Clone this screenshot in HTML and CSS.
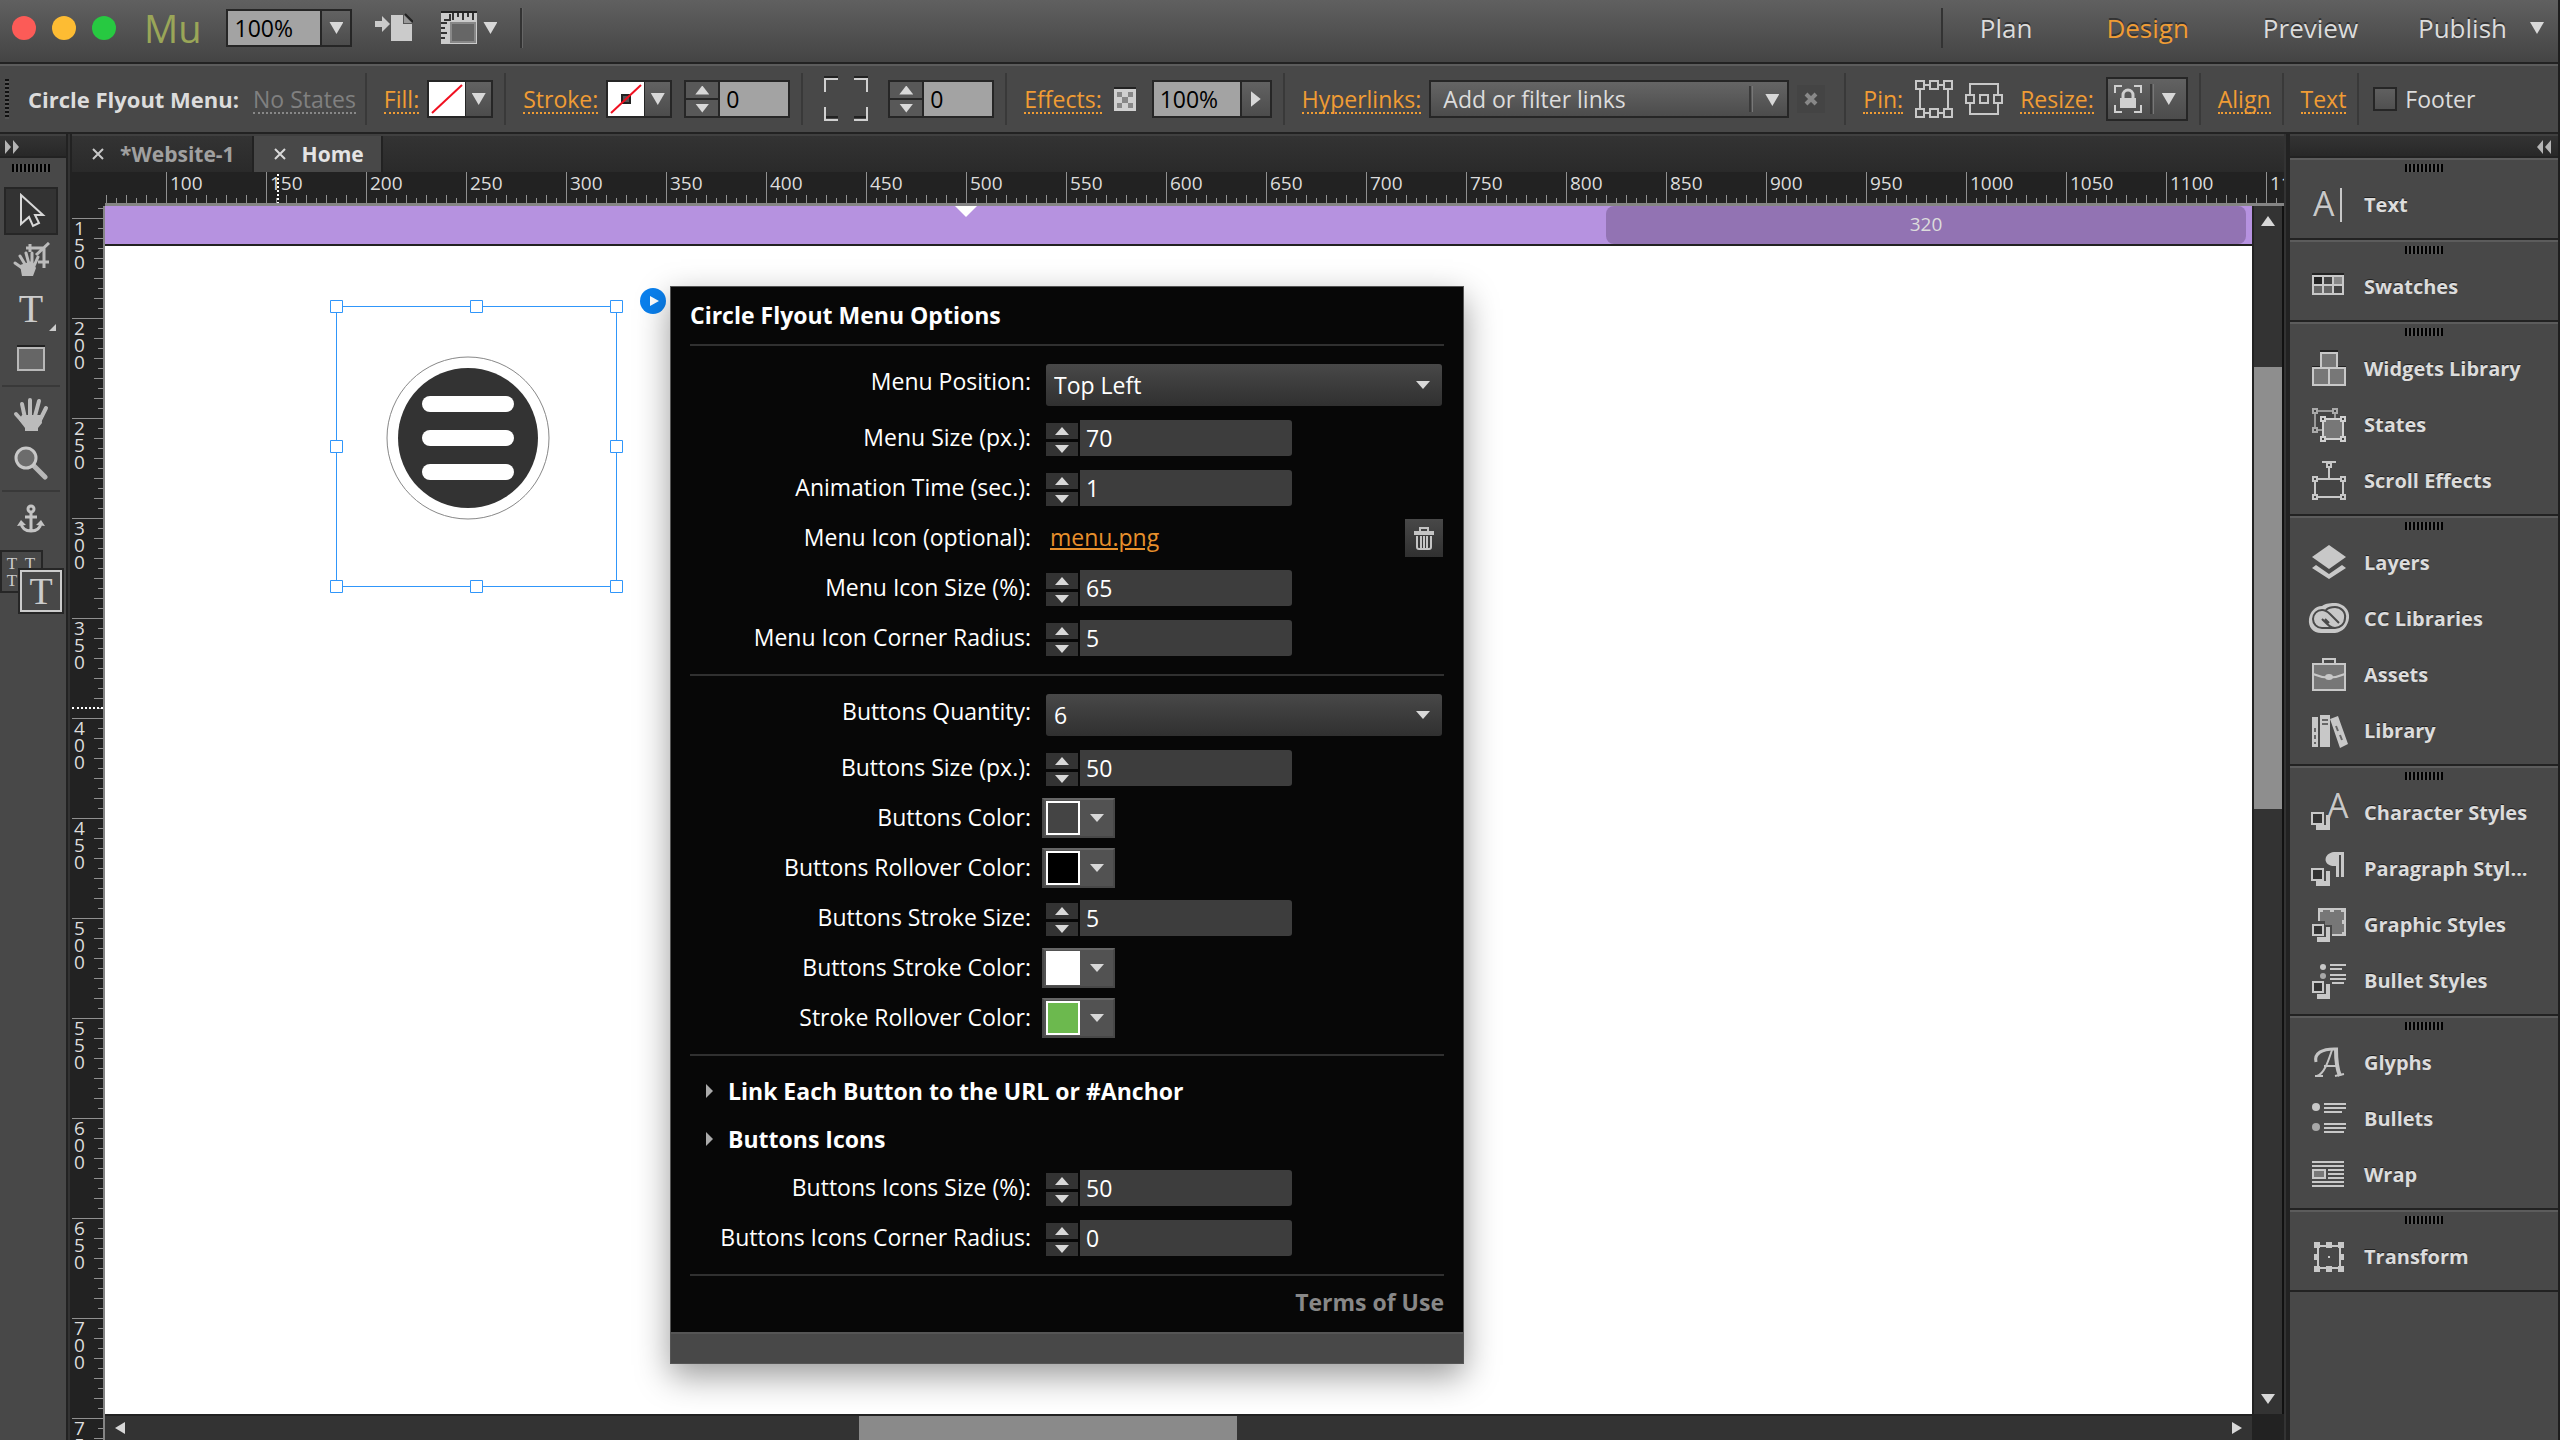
FILE: index.html
```html
<!DOCTYPE html>
<html lang="en">
<head>
    <meta charset="UTF-8">
    <meta name="viewport" content="width=device-width, initial-scale=1.0">
    <title>Circle Flyout Menu</title>
    <link rel="stylesheet" href="styles.css">
</head>
<body>

    <header class="titlebar">
        <div class="lights">
            <button class="light red" aria-label="Close"></button>
            <button class="light yellow" aria-label="Minimize"></button>
            <button class="light green" aria-label="Zoom"></button>
        </div>
        <span class="logo">Mu</span>
        <div class="combo">
            <input class="combo_field" type="text" value="100%" aria-label="Zoom level">
            <button class="combo_button" aria-label="Zoom levels"><i class="down"></i></button>
        </div>
        <button class="plain" aria-label="Place">
            <svg width="38" height="30" viewBox="0 0 38 30" fill="#cbcbcb"><path d="M0 8h7V3l8 8-8 8v-5H0z"/><path d="M16 2h12v9h9v17H16z"/><path d="M29 2l8 8h-8z" fill="#999"/><path d="M30 1l8 8" stroke="#222" stroke-width="2"/></svg>
        </button>
        <button class="plain view" aria-label="View options">
            <svg width="36" height="34" viewBox="0 0 36 34"><path d="M0 0h36v2H0z" fill="#222"/><path d="M0 2h36v31H0z" fill="#cbcbcb"/><path d="M10 12h24v19H10z" fill="#666" stroke="#888" stroke-width="2"/><path d="M12 2v7M17 2v4M22 2v7M27 2v4M32 2v7M0 12h6M0 17h4M0 22h6M0 27h4M3 9h6V3" stroke="#333" stroke-width="2" fill="none"/></svg>
            <i class="down"></i>
        </button>
        <span class="divider"></span>
        <nav class="modes">
            <a href="#">Plan</a>
            <a href="#" class="active">Design</a>
            <a href="#">Preview</a>
            <a href="#" class="publish">Publish <i class="down"></i></a>
        </nav>
    </header>

    <div class="controls">
        <span class="grip_side"></span>
        <div class="group first">
            <b>Circle Flyout Menu:</b>
            <a href="#" class="dim">No States</a>
        </div>
        <div class="group">
            <a href="#">Fill:</a>
            <button class="paint" aria-label="Fill color">
                <svg width="36" height="34" viewBox="0 0 36 34"><path fill="#fff" d="M0 0h36v34H0z"/><path d="M3 31L33 3" stroke="#f01020" stroke-width="2"/></svg>
                <span class="paint_arrow"><i class="down"></i></span>
            </button>
        </div>
        <div class="group">
            <a href="#">Stroke:</a>
            <button class="paint" aria-label="Stroke color">
                <svg width="36" height="34" viewBox="0 0 36 34"><path fill="#fff" d="M0 0h36v34H0z"/><path fill="#555" stroke="#222" stroke-width="2" d="M14 13h8v8h-8z"/><path d="M3 31L33 3" stroke="#f01020" stroke-width="2"/></svg>
                <span class="paint_arrow"><i class="down"></i></span>
            </button>
            <div class="stepper">
                <span class="stepper_buttons"><button aria-label="More stroke"><i class="up"></i></button><button aria-label="Less stroke"><i class="down"></i></button></span>
                <input type="text" value="0" aria-label="Stroke width">
            </div>
        </div>
        <div class="group">
            <svg class="corners" width="44" height="46" viewBox="0 0 44 46" fill="none"><path d="M0 1h14M30 1h14M0 41h14M30 41h14M1 31v2M43 31v2" stroke="#222" stroke-width="2"/><path d="M1 16V3h13M30 3h13v13M1 31v13h13M30 44h13V31" stroke="#d0d0d0" stroke-width="2"/></svg>
            <div class="stepper">
                <span class="stepper_buttons"><button aria-label="More radius"><i class="up"></i></button><button aria-label="Less radius"><i class="down"></i></button></span>
                <input type="text" value="0" aria-label="Corner radius">
            </div>
        </div>
        <div class="group">
            <a href="#">Effects:</a>
            <svg class="checker" width="22" height="24" viewBox="0 0 22 24"><path d="M0 0h22v2H0z" fill="#222"/><path fill="#d0d0d0" d="M0 2h22v22H0z"/><path fill="#888" d="M3 5h5v5H3zM14 5h5v5h-5zM8 10h6v6H8zM3 16h5v5H3zM14 16h5v5h-5z"/></svg>
            <div class="combo wide">
                <input class="combo_field" type="text" value="100%" aria-label="Opacity">
                <button class="combo_button" aria-label="Opacity slider"><i class="right"></i></button>
            </div>
        </div>
        <div class="group">
            <a href="#">Hyperlinks:</a>
            <div class="link_select">
                <select aria-label="Hyperlinks"><option>Add or filter links</option></select>
            </div>
            <button class="clear" aria-label="Clear link"><svg width="14" height="14" viewBox="0 0 14 14"><path d="M2 2l10 10M12 2L2 12" stroke="#888" stroke-width="4"/></svg></button>
        </div>
        <div class="group pins">
            <a href="#">Pin:</a>
            <button class="plain" aria-label="Pin to edges">
                <svg width="38" height="40" viewBox="0 0 38 40" fill="none" stroke="#c8c8c8" stroke-width="2"><path d="M5 10v20M33 10v20M9 6h5M24 6h5M9 34h5M24 34h5"/><path d="M1 2h8v8H1zM15 2h8v8h-8zM29 2h8v8h-8zM1 30h8v8H1zM15 30h8v8h-8zM29 30h8v8h-8z"/></svg>
            </button>
            <button class="plain" aria-label="Pin to center">
                <svg width="38" height="40" viewBox="0 0 38 40" fill="none" stroke="#c8c8c8" stroke-width="2"><path d="M5 15V5h28v10M5 25v10h28V25"/><path d="M1 16h8v8H1zM15 16h8v8h-8zM29 16h8v8h-8z"/></svg>
            </button>
            <a href="#">Resize:</a>
            <button class="lock" aria-label="Resize lock">
                <svg width="28" height="30" viewBox="0 0 28 30" fill="none"><path d="M1 9V2h7M20 2h7v7M1 21v7h7M20 28h7v-7" stroke="#d0d0d0" stroke-width="2"/><path d="M9 15v-4a5 5 0 0 1 10 0v4" stroke="#d0d0d0" stroke-width="3"/><path fill="#d0d0d0" d="M6 14h16v10H6z"/></svg>
                <span class="split"></span>
                <i class="down"></i>
            </button>
        </div>
        <div class="group"><a href="#">Align</a></div>
        <div class="group"><a href="#">Text</a></div>
        <div class="group footer_group">
            <input type="checkbox" id="footer">
            <label for="footer">Footer</label>
        </div>
    </div>

    <div class="main">
        <aside class="tools">
            <div class="dock_head">
                <svg width="16" height="14" viewBox="0 0 16 14" fill="#b4b4b4"><path d="M1 0l6 7-6 7zM9 0l6 7-6 7z"/></svg>
            </div>
            <span class="grip"></span>
            <button class="tool selected" aria-label="Selection">
                <svg width="36" height="36" viewBox="0 0 36 36"><path d="M8 2v29l8-7 4 9 6-3-4-8h8z" fill="#333" stroke="#d8d8d8" stroke-width="2"/></svg>
            </button>
            <button class="tool" aria-label="Crop">
                <svg width="38" height="36" viewBox="0 0 38 36" fill="none" stroke="#bbb" stroke-width="4"><path d="M14 6h18v20M18 2v8M26 20h11M37 1L24 13" stroke-width="3"/><path d="M13 28L3 21M14 24L8 14M17 22L14 11M20 22V11M22 24l4-9" stroke-width="3" stroke-linecap="round"/><path d="M8 23l12-4 4 7-3 8H10z" fill="#bbb" stroke="none"/></svg>
            </button>
            <button class="tool corner" aria-label="Text"><span class="t_glyph">T</span></button>
            <button class="tool" aria-label="Rectangle">
                <svg width="28" height="26" viewBox="0 0 28 26"><path fill="#222" d="M0 0h28v2H0z"/><path d="M1 3h26v22H1z" fill="#666" stroke="#b8b8b8" stroke-width="2"/></svg>
            </button>
            <span class="tools_line"></span>
            <button class="tool" aria-label="Hand">
                <svg width="36" height="36" viewBox="0 0 36 36" stroke="#bbb" stroke-width="4" stroke-linecap="round"><path d="M12 22L9 8M17 20V4M22 20l4-15M27 24l6-12M11 27L3 18"/><path stroke="none" fill="#bbb" d="M9 19h19l1 8-4 5v3H12v-3l-6-8z"/></svg>
            </button>
            <button class="tool" aria-label="Zoom">
                <svg width="34" height="34" viewBox="0 0 34 34" fill="none"><path d="M20 20l11 11" stroke="#b8b8b8" stroke-width="5" stroke-linecap="round"/><circle cx="12" cy="12" r="10" fill="#6c6c6c" stroke="#c8c8c8" stroke-width="3"/></svg>
            </button>
            <span class="tools_line"></span>
            <button class="tool" aria-label="Anchor">
                <svg width="28" height="30" viewBox="0 0 28 30" fill="none" stroke="#c4c4c4" stroke-width="3"><circle cx="14" cy="5" r="3"/><path d="M14 8v19M8 13h12M4 19c1 6 5 8 10 8s9-2 10-8"/><path fill="#c4c4c4" stroke="none" d="M0 22l4-6 5 5zM28 22l-4-6-5 5z"/></svg>
            </button>
            <button class="stacked" aria-label="Text frames">
                <span class="stacked_back"><span>T</span><span>T</span><span>T</span></span>
                <span class="stacked_front">T</span>
            </button>
        </aside>

        <main class="workspace">
            <div class="tabs">
                <a href="#" class="tab"><svg width="14" height="14" viewBox="0 0 14 14"><path d="M2 2l10 10M12 2L2 12" stroke="#c8c8c8" stroke-width="2"/></svg>*Website-1</a>
                <a href="#" class="tab current"><svg width="14" height="14" viewBox="0 0 14 14"><path d="M2 2l10 10M12 2L2 12" stroke="#d8d8d8" stroke-width="2"/></svg>Home</a>
            </div>
            <div class="stage">
                <div class="ruler_x">
                    <span>100</span><span>150</span><span>200</span><span>250</span><span>300</span><span>350</span><span>400</span><span>450</span><span>500</span><span>550</span><span>600</span><span>650</span><span>700</span><span>750</span><span>800</span><span>850</span><span>900</span><span>950</span><span>1000</span><span>1050</span><span>1100</span><span>1150</span>
                    <i class="cursor_x"></i>
                </div>
                <div class="ruler_y">
                    <span>150</span><span>200</span><span>250</span><span>300</span><span>350</span><span>400</span><span>450</span><span>500</span><span>550</span><span>600</span><span>650</span><span>700</span><span>750</span>
                    <i class="cursor_y"></i>
                </div>

                <div class="canvas">
                    <div class="breakpoints">
                        <i class="breakpoint_mark"></i>
                        <span class="breakpoint">320</span>
                    </div>

                    <svg class="selection" width="294" height="294" viewBox="0 0 294 294" fill="#fff">
                        <circle cx="138" cy="138" r="81" stroke="#888"/>
                        <circle cx="138" cy="138" r="70" fill="#333"/>
                        <rect x="92" y="96" width="92" height="16" rx="8"/>
                        <rect x="92" y="130" width="92" height="16" rx="8"/>
                        <rect x="92" y="164" width="92" height="16" rx="8"/>
                        <g stroke="#3096fa">
                            <path fill="none" d="M6.500 6.500h280v280h-280z"/>
                            <path d="M.5.5h12v12H.5zM140.500.5h12v12h-12zM280.500.5h12v12h-12zM.5 140.500h12v12H.5zM280.500 140.500h12v12h-12zM.5 280.500h12v12H.5zM140.500 280.500h12v12h-12zM280.500 280.500h12v12h-12z"/>
                        </g>
                    </svg>
                    <button class="play" aria-label="Options"><svg width="26" height="26" viewBox="0 0 26 26"><circle cx="13" cy="13" r="13" fill="#0a80ee"/><path fill="#fff" d="M10 8l9 5-9 5z"/></svg></button>

                    <form class="options">
                        <h2>Circle Flyout Menu Options</h2>
                        <section>
                            <div class="row tall">
                                <label for="position">Menu Position:</label>
                                <div class="drop"><select id="position"><option>Top Left</option></select></div>
                            </div>
                            <div class="row">
                                <label for="menu_size">Menu Size (px.):</label>
                                <div class="number"><span><button type="button" aria-label="Up"><i class="up"></i></button><button type="button" aria-label="Down"><i class="down"></i></button></span><input type="text" id="menu_size" value="70"></div>
                            </div>
                            <div class="row">
                                <label for="anim_time">Animation Time (sec.):</label>
                                <div class="number"><span><button type="button" aria-label="Up"><i class="up"></i></button><button type="button" aria-label="Down"><i class="down"></i></button></span><input type="text" id="anim_time" value="1"></div>
                            </div>
                            <div class="row">
                                <span class="label">Menu Icon (optional):</span>
                                <div class="file">
                                    <a href="#">menu.png</a>
                                    <button type="button" aria-label="Remove icon">
                                        <svg width="22" height="24" viewBox="0 0 22 24" fill="none" stroke="#c4c4c4" stroke-width="2"><path d="M7 5V2h8v3"/><path d="M1 7h20" stroke-width="4"/><path d="M4 10v11q0 2 2 2h10q2 0 2-2V10M8 10v12M11 10v12M14 10v12"/></svg>
                                    </button>
                                </div>
                            </div>
                            <div class="row">
                                <label for="icon_size">Menu Icon Size (%):</label>
                                <div class="number"><span><button type="button" aria-label="Up"><i class="up"></i></button><button type="button" aria-label="Down"><i class="down"></i></button></span><input type="text" id="icon_size" value="65"></div>
                            </div>
                            <div class="row">
                                <label for="icon_radius">Menu Icon Corner Radius:</label>
                                <div class="number"><span><button type="button" aria-label="Up"><i class="up"></i></button><button type="button" aria-label="Down"><i class="down"></i></button></span><input type="text" id="icon_radius" value="5"></div>
                            </div>
                        </section>
                        <section>
                            <div class="row tall">
                                <label for="quantity">Buttons Quantity:</label>
                                <div class="drop"><select id="quantity"><option>6</option></select></div>
                            </div>
                            <div class="row">
                                <label for="btn_size">Buttons Size (px.):</label>
                                <div class="number"><span><button type="button" aria-label="Up"><i class="up"></i></button><button type="button" aria-label="Down"><i class="down"></i></button></span><input type="text" id="btn_size" value="50"></div>
                            </div>
                            <div class="row">
                                <label for="btn_color">Buttons Color:</label>
                                <button type="button" class="swatch" id="btn_color"><span class="chip grey"></span><i class="down"></i></button>
                            </div>
                            <div class="row">
                                <label for="btn_rollover">Buttons Rollover Color:</label>
                                <button type="button" class="swatch" id="btn_rollover"><span class="chip black"></span><i class="down"></i></button>
                            </div>
                            <div class="row">
                                <label for="stroke_size">Buttons Stroke Size:</label>
                                <div class="number"><span><button type="button" aria-label="Up"><i class="up"></i></button><button type="button" aria-label="Down"><i class="down"></i></button></span><input type="text" id="stroke_size" value="5"></div>
                            </div>
                            <div class="row">
                                <label for="stroke_color">Buttons Stroke Color:</label>
                                <button type="button" class="swatch" id="stroke_color"><span class="chip white"></span><i class="down"></i></button>
                            </div>
                            <div class="row">
                                <label for="stroke_rollover">Stroke Rollover Color:</label>
                                <button type="button" class="swatch" id="stroke_rollover"><span class="chip lime"></span><i class="down"></i></button>
                            </div>
                        </section>
                        <section>
                            <button type="button" class="disclosure"><i class="right"></i>Link Each Button to the URL or #Anchor</button>
                            <button type="button" class="disclosure"><i class="right"></i>Buttons Icons</button>
                            <div class="row">
                                <label for="icons_size">Buttons Icons Size (%):</label>
                                <div class="number"><span><button type="button" aria-label="Up"><i class="up"></i></button><button type="button" aria-label="Down"><i class="down"></i></button></span><input type="text" id="icons_size" value="50"></div>
                            </div>
                            <div class="row">
                                <label for="icons_radius">Buttons Icons Corner Radius:</label>
                                <div class="number"><span><button type="button" aria-label="Up"><i class="up"></i></button><button type="button" aria-label="Down"><i class="down"></i></button></span><input type="text" id="icons_radius" value="0"></div>
                            </div>
                        </section>
                        <p class="terms"><a href="#">Terms of Use</a></p>
                        <div class="options_foot"></div>
                    </form>
                </div>

                <div class="scroll_y"><i class="up"></i><span class="thumb_y"></span><i class="down"></i></div>
                <div class="scroll_x"><i class="left"></i><span class="thumb_x"></span><i class="right"></i></div>
            </div>
        </main>

        <aside class="panels">
            <div class="dock_head end">
                <svg width="16" height="14" viewBox="0 0 16 14" fill="#b4b4b4"><path d="M7 0L1 7l6 7zM15 0L9 7l6 7z"/></svg>
            </div>
            <div class="panel">
                <span class="grip"></span>
                <button><svg viewBox="0 0 44 40"><text x="6" y="31" class="icon_letter">A</text><path d="M34 3v34" stroke="#c8c8c8" stroke-width="2"/></svg>Text</button>
            </div>
            <div class="panel">
                <span class="grip"></span>
                <button><svg viewBox="0 0 44 40"><path fill="#222" d="M5 6h32v2H5z"/><path fill="#c8c8c8" d="M5 8h32v20H5z"/><path fill="#222" d="M7 10h8v7H7z"/><path fill="#444" d="M17 10h8v7h-8zM27 19h8v7h-8z"/><path fill="#888" d="M27 10h8v7h-8z"/><path fill="#666" d="M7 19h8v7H7zM17 19h8v7h-8z"/></svg>Swatches</button>
            </div>
            <div class="panel">
                <span class="grip"></span>
                <button><svg viewBox="0 0 44 40"><path fill="#222" d="M13 1h18v2H13zM5 17h34v2H5z"/><path d="M14 4h16v15H14zM6 19h16v17H6zM22 19h16v17H22z" fill="#777" stroke="#c8c8c8" stroke-width="2"/></svg>Widgets Library</button>
                <button><svg viewBox="0 0 44 40" fill="#444" stroke-width="2"><path d="M8 6h20v19H8z" stroke="#999"/><path d="M6 4h4v4H6zM26 4h4v4h-4zM6 23h4v4H6z" stroke="#aaa"/><path d="M16 14h20v20H16z" fill="#777" stroke="#d0d0d0"/><path d="M14 12h4v4h-4zM34 12h4v4h-4zM14 32h4v4h-4zM34 32h4v4h-4z" stroke="#d0d0d0"/></svg>States</button>
                <button><svg viewBox="0 0 44 40" fill="#444" stroke="#c8c8c8" stroke-width="2"><path d="M15 1h14M22 6v12M8 18h28v18H8z"/><path d="M20 2h4v4h-4zM6 16h4v4H6zM34 16h4v4h-4zM6 34h4v4H6zM34 34h4v4h-4z"/></svg>Scroll Effects</button>
            </div>
            <div class="panel">
                <span class="grip"></span>
                <button><svg viewBox="0 0 44 40" fill="#c8c8c8"><path d="M22 2l17 12-17 12L5 14z"/><path d="M5 25l4-3 13 9 13-9 4 3-17 11z"/></svg>Layers</button>
                <button><svg viewBox="0 0 44 40" fill="none"><path d="M15 7C19 4 24 4 29 4c8 1 14 7 13 15-1 8-6 14-14 15H14C6 34 1 28 2 20 3 13 8 7 15 7z" fill="#c8c8c8"/><path d="M27 29H15c-5 0-9-4-9-9s4-9 9-9c3 0 5 1 8 4l9 9M19 11c2-2 5-3 9-3 6 0 11 5 10 11 0 6-5 10-10 10-4 0-6-2-13-9M22 24l-4-4" stroke="#4a4a4a" stroke-width="2"/></svg>CC Libraries</button>
                <button><svg viewBox="0 0 44 40" stroke="#c8c8c8" stroke-width="2" fill="#777"><path d="M16 9V4h12v5" fill="none"/><path d="M6 9h32v26H6z"/><path d="M6 19q16 7 32 0" fill="none"/><ellipse cx="22" cy="22" rx="3" ry="2" fill="#c8c8c8"/></svg>Assets</button>
                <button><svg viewBox="0 0 44 40" fill="#c8c8c8"><path d="M5 6h6v30H5zM13 4h10v32H13zM23 8l8-3 10 28-8 4z"/><path d="M8 17v4M8 24v4M8 31v2M15 9h6M15 13h6M29 15l2 5M33 24l2 5" stroke="#666" stroke-width="2"/></svg>Library</button>
            </div>
            <div class="panel">
                <span class="grip"></span>
                <button><svg viewBox="0 0 44 40"><text x="20" y="25" class="icon_letter">A</text><path fill="#c8c8c8" d="M9 32h10V22h4v15H9z"/><path d="M5 20h11v11H5z" fill="#333" stroke="#c8c8c8" stroke-width="2"/></svg>Character Styles</button>
                <button><svg viewBox="0 0 44 40"><path fill="#c8c8c8" d="M37 3v25h-3V6h-2v22h-3V17c-14 1-13-13-2-14z"/><path fill="#c8c8c8" d="M9 32h10V22h4v15H9z"/><path d="M5 20h11v11H5z" fill="#333" stroke="#c8c8c8" stroke-width="2"/></svg>Paragraph Styl...</button>
                <button><svg viewBox="0 0 44 40"><path d="M12 4h26v26H12z" fill="#777" stroke="#c8c8c8" stroke-width="2"/><path fill="#c8c8c8" d="M11 3h5v4h-5zM23 3h4v4h-4zM34 3h5v4h-5zM35 15h4v4h-4zM35 27h4v4h-4z"/><path fill="#484848" d="M3 16h15v4h7v20H3z"/><path fill="#c8c8c8" d="M10 32h9V22h4v15H10z"/><path d="M6 20h10v10H6z" fill="#333" stroke="#c8c8c8" stroke-width="2"/></svg>Graphic Styles</button>
                <button><svg viewBox="0 0 44 40"><circle cx="16" cy="6" r="3" fill="#c8c8c8"/><circle cx="16" cy="15" r="3" fill="#a8a8a8"/><path d="M23 4h16M23 8h12M23 14h16M23 18h16M25 22h12" stroke="#c8c8c8" stroke-width="2"/><path fill="#c8c8c8" d="M10 33h9V23h4v15H10z"/><path d="M6 21h10v10H6z" fill="#333" stroke="#c8c8c8" stroke-width="2"/></svg>Bullet Styles</button>
            </div>
            <div class="panel">
                <span class="grip"></span>
                <button><svg viewBox="0 0 44 40" fill="none" stroke="#c4c4c4"><path d="M9 19C7 11 14 5 31 6" stroke-width="3"/><path d="M25 7C21 19 17 31 10 33" stroke-width="2"/><path d="M29 6c0 10 1 20 4 27" stroke-width="4"/><path d="M17 23h14M8 33h8M28 33l9-2" stroke-width="2"/></svg>Glyphs</button>
                <button><svg viewBox="0 0 44 40"><circle cx="9" cy="8" r="4" fill="#c8c8c8"/><circle cx="9" cy="28" r="4" fill="#a8a8a8"/><path d="M17 5h22M17 9h22M17 13h18M17 25h22M17 29h22M17 33h20" stroke="#c8c8c8" stroke-width="2"/></svg>Bullets</button>
                <button><svg viewBox="0 0 44 40"><path d="M5 7h32M5 11h32M21 15h16M21 19h16M21 23h16M5 27h32M5 31h32" stroke="#c8c8c8" stroke-width="2"/><path d="M6 15h12v8H6z" fill="#777" stroke="#c8c8c8" stroke-width="2"/></svg>Wrap</button>
            </div>
            <div class="panel">
                <span class="grip"></span>
                <button><svg viewBox="0 0 44 40"><path d="M11 9h22v22H11z" fill="none" stroke="#c8c8c8" stroke-width="2"/><path fill="#c8c8c8" d="M7 5h6v6H7zM19 5h6v6h-6zM31 5h6v6h-6zM7 17h5v6H7zM32 17h5v6h-5zM7 29h6v6H7zM19 29h6v6h-6zM31 29h6v6h-6zM21 19h2v2h-2z"/></svg>Transform</button>
            </div>
        </aside>
    </div>

</body>
</html>
```
FILE: styles.css
```css
*,*::after,*::before{
    box-sizing: border-box;
    margin: 0;
    padding: 0;
}

body{
    display: flex;
    flex-direction: column;
    height: 100vh;
    overflow: hidden;
    border-right: 2px solid #1e1e1e;
    background-color: #484848;
    color: #dcdcdc;
    font-family: "Open Sans", "Noto Sans", sans-serif;
    font-size: 23px;
    font-weight: 500;
    line-height: 30px;
}

button, input, select{
    font: inherit;
    color: inherit;
    border: none;
    border-radius: 0;
    background: none;
    appearance: none;
    outline: none;
}

a{
    color: inherit;
    text-decoration: none;
}

svg{
    display: block;
    flex: none;
}

/* small arrows */
.down, .up, .right, .left{
    display: block;
    flex: none;
    width: 14px;
    height: 12px;
    background-color: #d8d8d8;
}

.down{
    clip-path: polygon(0 0, 100% 0, 50% 100%);
}

.up{
    clip-path: polygon(50% 0, 100% 100%, 0 100%);
}

.right, .left{
    width: 10px;
    height: 16px;
}

.right{
    clip-path: polygon(0 0, 100% 50%, 0 100%);
}

.left{
    clip-path: polygon(100% 0, 100% 100%, 0 50%);
}

/* title bar */
.titlebar{
    display: flex;
    align-items: center;
    flex: none;
    height: 64px;
    padding: 0 14px 6px 12px;
    border-bottom: 2px solid #222;
    background-image: linear-gradient(#606060, #444);
}

.lights{
    display: flex;
    gap: 16px;
}

.light{
    width: 24px;
    height: 24px;
    border-radius: 50%;
}

.red{
    background-color: #fc5b57;
}

.yellow{
    background-color: #fdbc33;
}

.green{
    background-color: #27c941;
}

.logo{
    margin: 0 25px 0 28px;
    color: #9aa658;
    font-size: 38px;
}

.combo{
    display: flex;
    width: 126px;
    height: 38px;
    border: 2px solid #262626;
}

.combo_field{
    flex: 1;
    min-width: 0;
    padding-left: 6px;
    background-color: #a3a3a3;
    color: #000;
}

.combo_button{
    display: grid;
    place-items: center;
    width: 30px;
    border-left: 2px solid #262626;
    background-image: linear-gradient(#626262, #4c4c4c);
}

.plain{
    display: flex;
    align-items: center;
}

.combo + .plain{
    margin: 0 28px 0 23px;
}

.view{
    gap: 6px;
}

.divider{
    width: 3px;
    height: 40px;
    margin-left: 23px;
    border-left: 2px solid #333;
    border-right: 1px solid #666;
}

.modes{
    display: flex;
    gap: 74px;
    height: 40px;
    margin-left: auto;
    padding-left: 37px;
    border-left: 2px solid #333;
    font-size: 26px;
    line-height: 40px;
    text-shadow: 0 -2px #333;
}

.modes .active{
    color: #f09c34;
}

.publish{
    display: flex;
    align-items: center;
    gap: 23px;
    margin-left: -14px;
}

/* control bar */
.controls{
    display: flex;
    align-items: center;
    flex: none;
    height: 70px;
    border-top: 2px solid #5c5c5c;
    border-bottom: 2px solid #222;
}

.grip_side{
    width: 4px;
    height: 40px;
    margin: 0 19px 0 5px;
    background-image: repeating-linear-gradient(#111 0 2px, #555 2px 4px);
}

.group{
    display: flex;
    align-items: center;
    height: 52px;
    padding: 0 11px 0 17px;
    border-left: 2px solid #393939;
    white-space: nowrap;
}

.group > a{
    margin-right: 8px;
    padding-top: 2px;
    border-bottom: 2px dotted #f09c34;
    color: #f09c34;
    line-height: 26px;
}

.group > a:last-child{
    margin-right: 0;
}

.first{
    gap: 14px;
    padding: 0 9px 0 0;
    border-left: none;
}

.first b{
    font-size: 22px;
}

.group > .dim{
    border-color: #888;
    color: #808080;
}

.paint{
    display: flex;
    width: 66px;
    height: 38px;
    border: 2px solid #262626;
    background-color: #262626;
}

.paint_arrow{
    display: grid;
    place-items: center;
    flex: 1;
    height: 34px;
    margin-left: 1px;
    background-image: linear-gradient(#626262, #4c4c4c);
}

.stepper{
    display: flex;
    width: 106px;
    height: 38px;
    border: 2px solid #262626;
}

.paint + .stepper{
    margin-left: 12px;
}

.corners{
    margin: 0 20px 0 4px;
}

.stepper_buttons{
    display: grid;
    gap: 2px;
    width: 34px;
    border-right: 2px solid #262626;
    background-color: #262626;
}

.stepper_buttons button{
    display: grid;
    place-items: center;
    background-color: #585858;
}

.stepper_buttons i{
    height: 9px;
}

.stepper input{
    flex: 1;
    min-width: 0;
    padding-left: 6px;
    background-color: #a3a3a3;
    color: #000;
}

.checker{
    margin: 0 16px 0 4px;
}

.wide{
    width: 120px;
}

.link_select{
    position: relative;
    width: 360px;
    height: 38px;
    border: 2px solid #262626;
    background-image: linear-gradient(#656565, #4c4c4c);
}

.link_select select{
    width: 100%;
    height: 34px;
    padding-left: 12px;
}

.link_select::before{
    content: "";
    position: absolute;
    right: 34px;
    top: 4px;
    width: 4px;
    height: 26px;
    border-left: 2px solid #3a3a3a;
    border-right: 1px solid #777;
}

.link_select::after{
    content: "";
    position: absolute;
    right: 8px;
    top: 12px;
    width: 14px;
    height: 12px;
    background-color: #d8d8d8;
    clip-path: polygon(0 0, 100% 0, 50% 100%);
}

.clear{
    display: grid;
    place-items: center;
    width: 28px;
    height: 28px;
    margin: 0 8px;
    background-color: #444;
}

.pins .plain{
    margin: 0 8px 0 4px;
}

.pins .plain + a{
    margin: 0 12px 0 9px;
}

.lock{
    display: flex;
    align-items: center;
    gap: 8px;
    width: 82px;
    height: 44px;
    padding-left: 6px;
    border: 2px solid #262626;
    background-image: linear-gradient(#626262, #4c4c4c);
}

.split{
    width: 4px;
    height: 30px;
    border-left: 2px solid #3a3a3a;
    border-right: 1px solid #777;
}

.footer_group{
    gap: 8px;
    padding-left: 14px;
}

.footer_group input{
    width: 24px;
    height: 24px;
    border: 2px solid #262626;
    background-image: linear-gradient(#606060, #505050);
}

/* main area */
.main{
    display: flex;
    flex: 1;
    gap: 2px;
    min-height: 0;
    background-color: #333;
}

.dock_head{
    display: flex;
    height: 24px;
    padding: 4px 4px 0;
    border-top: 2px solid #404040;
    border-bottom: 2px solid #222;
    background-image: linear-gradient(#333, #282828);
}

.end{
    justify-content: flex-end;
    padding-right: 6px;
}

.grip{
    display: block;
    width: 38px;
    height: 8px;
    background-image: repeating-linear-gradient(90deg, #000 0 2px, #555 2px 4px);
}

.tools{
    display: flex;
    flex-direction: column;
    flex: none;
    gap: 1px;
    width: 68px;
    border-right: 2px solid #222;
    background-color: #484848;
}

.tools .grip{
    margin: 5px 0 14px 12px;
}

.tool{
    display: grid;
    place-items: center;
    width: 54px;
    height: 48px;
    margin-left: 4px;
}

.selected{
    border: 2px solid #262626;
    background-color: #333;
}

.t_glyph{
    color: #ccc;
    font-family: "Liberation Serif", serif;
    font-size: 40px;
}

.corner{
    position: relative;
}

.corner::after{
    content: "";
    position: absolute;
    right: 2px;
    bottom: 2px;
    width: 7px;
    height: 7px;
    background-color: #ccc;
    clip-path: polygon(100% 0, 100% 100%, 0 100%);
}

.tools_line{
    height: 2px;
    margin: 2px 6px 2px 2px;
    background-color: #393939;
}

.stacked{
    position: relative;
    width: 64px;
    height: 64px;
    margin-top: 6px;
    color: #ccc;
    font-family: "Liberation Serif", serif;
}

.stacked_back{
    position: absolute;
    left: 0;
    top: 0;
    display: grid;
    grid-template-columns: 18px 18px;
    grid-auto-rows: 17px;
    width: 43px;
    height: 43px;
    padding: 3px 1px;
    border: 2px solid #262626;
    font-size: 17px;
    line-height: 17px;
}

.stacked_front{
    position: absolute;
    left: 20px;
    top: 20px;
    width: 42px;
    height: 42px;
    border: 2px solid #ccc;
    outline: 2px solid #262626;
    background-color: #484848;
    font-size: 38px;
    line-height: 38px;
}

.workspace{
    display: flex;
    flex-direction: column;
    flex: 1;
    min-width: 0;
    border-left: 2px solid #222;
}

.tabs{
    display: flex;
    flex: none;
    height: 38px;
    border-top: 2px solid #404040;
    background-image: linear-gradient(#333, #2a2a2a);
    font-size: 21px;
    font-weight: bold;
}

.tab{
    display: flex;
    align-items: center;
    gap: 15px;
    padding: 0 17px 0 19px;
    border-right: 2px solid #222;
    color: #a0a0a0;
}

.current{
    background-color: #484848;
    color: #e4e4e4;
}

.stage{
    display: grid;
    grid-template-columns: 33px 1fr 32px;
    grid-template-rows: 34px 1fr 26px;
    flex: 1;
    min-height: 0;
    background-color: #222;
    font-size: 19px;
}

.ruler_x{
    position: relative;
    grid-column: 2 / 4;
    display: flex;
    padding-left: 61px;
    overflow: hidden;
    border-bottom: 3px solid #858585;
    background-image: repeating-linear-gradient(90deg, transparent 0 1px, #909090 1px 2px, transparent 2px 20px), repeating-linear-gradient(90deg, transparent 0 1px, #909090 1px 2px, transparent 2px 10px);
    background-size: 100% 8px, 100% 5px;
    background-position: left bottom;
    background-repeat: no-repeat;
}

.ruler_x span{
    flex: 0 0 100px;
    padding-left: 3px;
    border-left: 1px solid #909090;
    line-height: 22px;
}

.cursor_x{
    position: absolute;
    left: 172px;
    top: 2px;
    height: 30px;
    border-left: 2px dotted #fff;
}

.ruler_y{
    position: relative;
    grid-row: 2 / 4;
    display: flex;
    flex-direction: column;
    padding-top: 12px;
    overflow: hidden;
    border-right: 2px solid #858585;
    background-image: repeating-linear-gradient(transparent 0 12px, #909090 12px 13px, transparent 13px 20px), repeating-linear-gradient(transparent 0 2px, #909090 2px 3px, transparent 3px 10px);
    background-size: 9px 100%, 5px 100%;
    background-position: right top;
    background-repeat: no-repeat;
}

.ruler_y span{
    flex: 0 0 100px;
    padding: 1px 17px 0 2px;
    border-top: 1px solid #909090;
    line-height: 17px;
    word-break: break-all;
}

.cursor_y{
    position: absolute;
    left: 0;
    top: 501px;
    width: 31px;
    border-top: 2px dotted #fff;
}

.canvas{
    position: relative;
    min-height: 0;
    background-color: #fff;
}

.breakpoints{
    display: flex;
    justify-content: flex-end;
    height: 40px;
    padding-right: 6px;
    border-bottom: 2px solid #222;
    background-color: #b692e0;
}

.breakpoint{
    width: 640px;
    border-radius: 8px;
    background-color: #9273b3;
    line-height: 37px;
    text-align: center;
}

.breakpoint_mark{
    position: absolute;
    left: 850px;
    top: 0;
    width: 22px;
    height: 11px;
    background-color: #fff;
    clip-path: polygon(0 0, 100% 0, 50% 100%);
}

.selection{
    position: absolute;
    left: 225px;
    top: 94px;
}

.play{
    position: absolute;
    left: 535px;
    top: 82px;
}

/* widget options window */
.options{
    position: absolute;
    left: 565px;
    top: 80px;
    width: 794px;
    border: 1px solid #555;
    background-color: #070707;
    box-shadow: 0 12px 32px rgba(0, 0, 0, .4);
    color: #fff;
    font-size: 23px;
}

.options h2{
    margin: 1px 19px 0;
    padding-bottom: 2px;
    font-size: 23px;
    line-height: 54px;
}

.options section{
    margin: 0 19px;
    padding: 11px 0;
    border-top: 2px solid #303030;
}

.row{
    display: grid;
    grid-template-columns: 341px 1fr;
    column-gap: 15px;
    align-items: center;
    height: 50px;
}

.row label, .label{
    padding-bottom: 3px;
    text-align: right;
}

.tall{
    height: 56px;
}

.tall label{
    padding-bottom: 9px;
}

.drop{
    position: relative;
    margin-right: 2px;
}

.drop select{
    display: block;
    width: 100%;
    height: 42px;
    padding-left: 8px;
    border-radius: 3px;
    background-image: linear-gradient(#484848, #303030);
}

.drop::after{
    content: "";
    position: absolute;
    right: 12px;
    top: 17px;
    width: 14px;
    height: 8px;
    background-color: #d8d8d8;
    clip-path: polygon(0 0, 100% 0, 50% 100%);
}

.number{
    display: flex;
    gap: 2px;
    width: 246px;
    height: 36px;
}

.number span{
    display: grid;
    grid-template-rows: 16px 14px;
    align-content: end;
    gap: 3px;
    width: 32px;
}

.number button{
    display: grid;
    place-items: center;
    background-color: #333;
}

.number i{
    height: 8px;
}

.number input{
    flex: 1;
    min-width: 0;
    padding-left: 6px;
    border-radius: 0 3px 3px 0;
    background-color: #3d3d3d;
}

.file{
    display: flex;
    align-items: center;
    justify-content: space-between;
    padding: 0 1px 0 4px;
}

.file a{
    padding-bottom: 3px;
    color: #e8902c;
    text-decoration: underline;
}

.file button{
    display: grid;
    place-items: center;
    width: 38px;
    height: 38px;
    background-image: linear-gradient(#484848, #303030);
}

.swatch{
    display: flex;
    align-items: center;
    gap: 10px;
    width: 73px;
    height: 40px;
    margin-left: -4px;
    padding-left: 2px;
    border: 2px solid #484848;
    border-top-color: #666;
    background-color: #525252;
}

.swatch i{
    height: 8px;
}

.chip{
    width: 34px;
    height: 34px;
    border: 2px solid #fff;
}

.grey{
    background-color: #444;
}

.black{
    background-color: #000;
}

.white{
    background-color: #fff;
}

.lime{
    background-color: #6cb94e;
}

.disclosure{
    display: flex;
    align-items: center;
    gap: 15px;
    height: 48px;
    padding-left: 16px;
    font-size: 23px;
    font-weight: bold;
}

.disclosure i{
    width: 7px;
    height: 14px;
    background-color: #aaa;
}

.terms{
    margin: 0 19px;
    padding-bottom: 4px;
    border-top: 2px solid #303030;
    color: #888;
    font-weight: bold;
    line-height: 52px;
    text-align: right;
}

.options_foot{
    height: 31px;
    border-top: 2px solid #555;
    background-color: #484848;
}

/* scroll bars */
.scroll_y, .scroll_x{
    display: flex;
    align-items: center;
    justify-content: space-between;
    background-color: #333;
}

.scroll_y{
    flex-direction: column;
    padding: 10px 0;
    border-left: 2px solid #222;
    border-right: 2px solid #111;
}

.scroll_y i{
    height: 10px;
}

.thumb_y{
    width: 100%;
    height: 442px;
    margin-bottom: 444px;
    background-color: #8e8e8e;
}

.scroll_x{
    grid-column: 2;
    padding: 0 10px;
    border-top: 2px solid #222;
}

.scroll_x i{
    height: 12px;
}

.thumb_x{
    width: 378px;
    height: 100%;
    margin-right: 262px;
    background-color: #8a8a8a;
}

/* right dock */
.panels{
    flex: none;
    width: 272px;
    border-left: 4px solid #222;
    background-color: #484848;
}

.panel{
    padding-bottom: 5px;
    border-top: 2px solid #5c5c5c;
    border-bottom: 2px solid #222;
}

.panel .grip{
    margin: 4px auto 5px;
}

.panel button{
    display: flex;
    align-items: center;
    gap: 13px;
    width: 100%;
    height: 56px;
    padding-left: 17px;
    font-size: 20px;
    font-weight: bold;
    text-shadow: 0 -1px #222;
}

.panel svg{
    width: 44px;
    height: 40px;
}

.icon_letter{
    fill: #c8c8c8;
    font-family: "Open Sans", sans-serif;
    font-size: 34px;
    font-weight: normal;
}
```
